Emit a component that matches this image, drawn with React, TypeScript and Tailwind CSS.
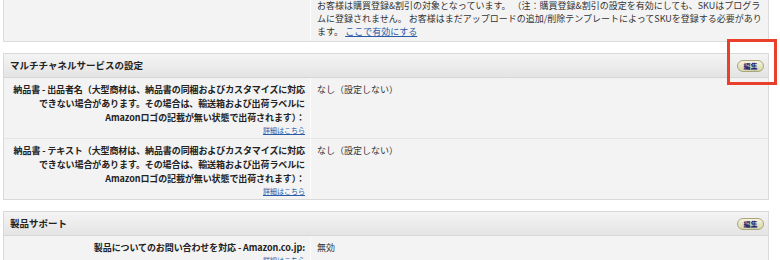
import type { ReactNode } from 'react';

const font = { fontFamily: '"Noto Sans CJK JP", "Noto Sans", sans-serif' };

function EditButton() {
  return (
    <button className="h-[12px] w-[27px] rounded-full border border-[#a8a47c] bg-gradient-to-b from-[#f6f4df] to-[#d9d5ab] text-[7px] font-bold leading-[10px] text-[#1a1f6e]">
      編集
    </button>
  );
}

function PanelHeader({ title, editable }: { title: string; editable?: boolean }) {
  return (
    <div className="flex h-[24px] items-center justify-between border-b border-[#d6d6d6] bg-gradient-to-b from-[#f4f4f4] to-[#e4e4e4] pl-[6px] pr-[4px]">
      <span className="text-[9.5px] font-bold text-[#222]">{title}</span>
      {editable && <EditButton />}
    </div>
  );
}

function DetailLink() {
  return <a href="#" className="text-[7px] leading-[10px] text-[#2b5ba8] underline">詳細はこちら</a>;
}

function Row({ label, value, last }: { label: ReactNode; value: string; last?: boolean }) {
  return (
    <div className={`flex ${last ? '' : 'border-b border-[#e6e6e6]'}`}>
      <div className="flex w-[307px] shrink-0 flex-col items-end border-r border-[#fcfcfc] pb-[3px] pl-[4px] pr-[5px] pt-[5px] text-right">
        <div className="whitespace-nowrap text-[9px] font-bold leading-[14px] tracking-[-0.1px] text-[#222]">{label}</div>
        <DetailLink />
      </div>
      <div className="flex-1 pl-[6px] pt-[5px] text-[9px] leading-[14px] text-[#333]">{value}</div>
    </div>
  );
}

export default function App() {
  return (
    <div className="relative h-[260px] w-[780px] overflow-hidden bg-white" style={font}>
      <div className="flex flex-col gap-[11px] pl-[3px] pr-[11px]">
        {/* 前のセクション（上部が切れている） */}
        <div className="-mt-[3px] flex border border-[#dcdcdc] bg-[#f3f3f3]">
          <div className="w-[307px] shrink-0 border-r border-[#fcfcfc]" />
          <div className="flex-1 whitespace-nowrap pb-[3px] pl-[6px] pt-[1px] text-[9px] leading-[13px] text-[#333]">
            お客様は購買登録&amp;割引の対象となっています。 （注：購買登録&amp;割引の設定を有効にしても、SKUはプログラ
            <br />
            ムに登録されません。 お客様はまだアップロードの追加/削除テンプレートによってSKUを登録する必要があり
            <br />
            ます。 <a href="#" className="text-[#2b5ba8] underline">ここで有効にする</a>
          </div>
        </div>

        <div className="border border-[#d9d9d9] bg-[#f3f3f3]">
          <PanelHeader title="マルチチャネルサービスの設定" editable />
          <Row
            label={<>納品書 - 出品者名（大型商材は、納品書の同梱およびカスタマイズに対応<br />できない場合があります。その場合は、輸送箱および出荷ラベルに<br />Amazonロゴの記載が無い状態で出荷されます）：</>}
            value="なし（設定しない）"
          />
          <Row
            label={<>納品書 - テキスト（大型商材は、納品書の同梱およびカスタマイズに対応<br />できない場合があります。その場合は、輸送箱および出荷ラベルに<br />Amazonロゴの記載が無い状態で出荷されます）：</>}
            value="なし（設定しない）"
            last
          />
        </div>

        <div className="border border-[#d9d9d9] bg-[#f3f3f3]">
          <PanelHeader title="製品サポート" editable />
          <Row label="製品についてのお問い合わせを対応 - Amazon.co.jp:" value="無効" last />
        </div>
      </div>

      {/* 注釈の赤枠 */}
      <div className="absolute left-[727px] top-[39px] h-[46px] w-[50px] border-[3px] border-[#e8402b]" />
    </div>
  );
}
